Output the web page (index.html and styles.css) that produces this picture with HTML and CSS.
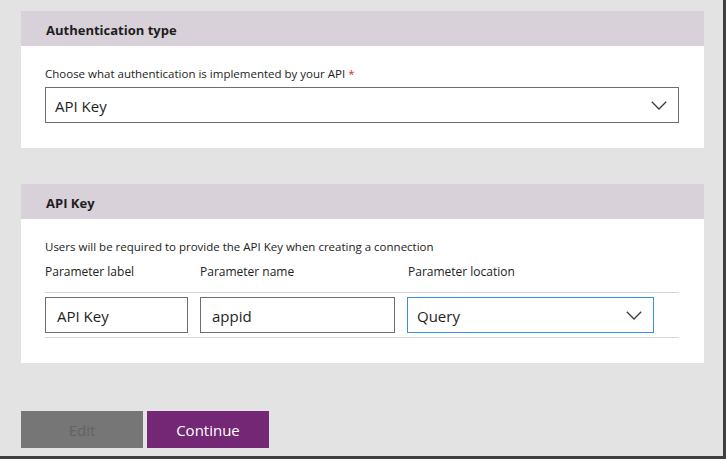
FILE: index.html
```html
<!DOCTYPE html>
<html>
<head>
<meta charset="utf-8">
<link rel="stylesheet" href="styles.css">
</head>
<body>
<div class="frame">
  <section class="card card-auth">
    <header class="card-head">Authentication type</header>
    <div class="card-body auth-body">
      <div class="field-label">Choose what authentication is implemented by your API <span class="req">*</span></div>
      <div class="select select-wide">
        <span>API Key</span>
        <svg class="chev" width="16" height="9" viewBox="0 0 16 9"><polyline points="0.8,0.8 8,8 15.2,0.8" fill="none" stroke="#3c3c3c" stroke-width="1.3"/></svg>
      </div>
    </div>
  </section>

  <section class="card card-key">
    <header class="card-head">API Key</header>
    <div class="card-body key-body">
      <div class="desc">Users will be required to provide the API Key when creating a connection</div>
      <div class="param-grid param-labels">
        <div>Parameter label</div>
        <div>Parameter name</div>
        <div>Parameter location</div>
      </div>
      <div class="param-grid param-row">
        <div class="input">API Key</div>
        <div class="input">appid</div>
        <div class="select select-focus">
          <span>Query</span>
          <svg class="chev" width="16" height="9" viewBox="0 0 16 9"><polyline points="0.8,0.8 8,8 15.2,0.8" fill="none" stroke="#3c3c3c" stroke-width="1.3"/></svg>
        </div>
      </div>
    </div>
  </section>

  <div class="actions">
    <button class="btn btn-edit" disabled>Edit</button>
    <button class="btn btn-continue">Continue</button>
  </div>
</div>
</body>
</html>
```

FILE: styles.css
```css
html, body {
  margin: 0;
  padding: 0;
  background: #ffffff;
}

body {
  font-family: "Open Sans", "Noto Sans", sans-serif;
  color: #222;
  min-height: 461px;
}

.frame {
  width: 726px;
  height: 459px;
  background: #e3e3e3;
  border-right: 3px solid #404040;
  border-bottom: 3px solid #404040;
  padding: 11px 0 0 21px;
  box-sizing: border-box;
}

.card {
  width: 683px;
  background: #ffffff;
}

.card-head {
  height: 35px;
  box-sizing: border-box;
  background: #d9d1d9;
  padding-left: 25px;
  padding-top: 3px;
  font-weight: 700;
  font-size: 13px;
  line-height: 32px;
  color: #1e1e1e;
}

.card-body {
  padding-left: 24px;
  padding-right: 25px;
  font-size: 11.5px;
}

.auth-body {
  height: 102px;
  box-sizing: border-box;
  padding-top: 20px;
}

.field-label {
  line-height: 16px;
  height: 16px;
  margin-bottom: 5px;
  color: #222;
}

.req {
  color: #d0312d;
}

.select {
  display: flex;
  align-items: center;
  justify-content: space-between;
  height: 36px;
  box-sizing: border-box;
  border: 1px solid #6e6e6e;
  padding: 2px 11px 0 9px;
  font-size: 15px;
  color: #1e1e1e;
  background: #fff;
}

.select-wide {
  width: 634px;
}

.chev {
  display: block;
  margin-top: -1px;
}

.card-key {
  margin-top: 36px;
}

.key-body {
  height: 144px;
  box-sizing: border-box;
  padding-top: 20px;
}

.desc {
  line-height: 16px;
  height: 16px;
  color: #222;
}

.param-grid {
  display: grid;
  grid-template-columns: 143px 195px 247px;
  column-gap: 12px;
  width: 634px;
}

.param-labels {
  margin-top: 9px;
  height: 16px;
  line-height: 16px;
  font-size: 12px;
  color: #222;
  margin-bottom: 12px;
}

.param-labels div:last-child {
  padding-left: 1px;
}

.param-row {
  border-top: 1px solid #d4d4d4;
  border-bottom: 1px solid #d4d4d4;
  padding: 4px 0;
}

.input {
  height: 36px;
  box-sizing: border-box;
  border: 1px solid #6e6e6e;
  padding-left: 11px;
  line-height: 36px;
  font-size: 15px;
  color: #1e1e1e;
}

.select-focus {
  border-color: #3a8ee6;
}

.actions {
  display: flex;
  gap: 4px;
  margin-top: 48px;
}

.btn {
  width: 122px;
  height: 37px;
  border: none;
  font-family: "Open Sans", "Noto Sans", sans-serif;
  font-size: 15px;
  padding: 0;
}

.btn-edit {
  background: #767676;
  color: #636363;
}

.btn-continue {
  background: #742774;
  color: #ffffff;
}
```
